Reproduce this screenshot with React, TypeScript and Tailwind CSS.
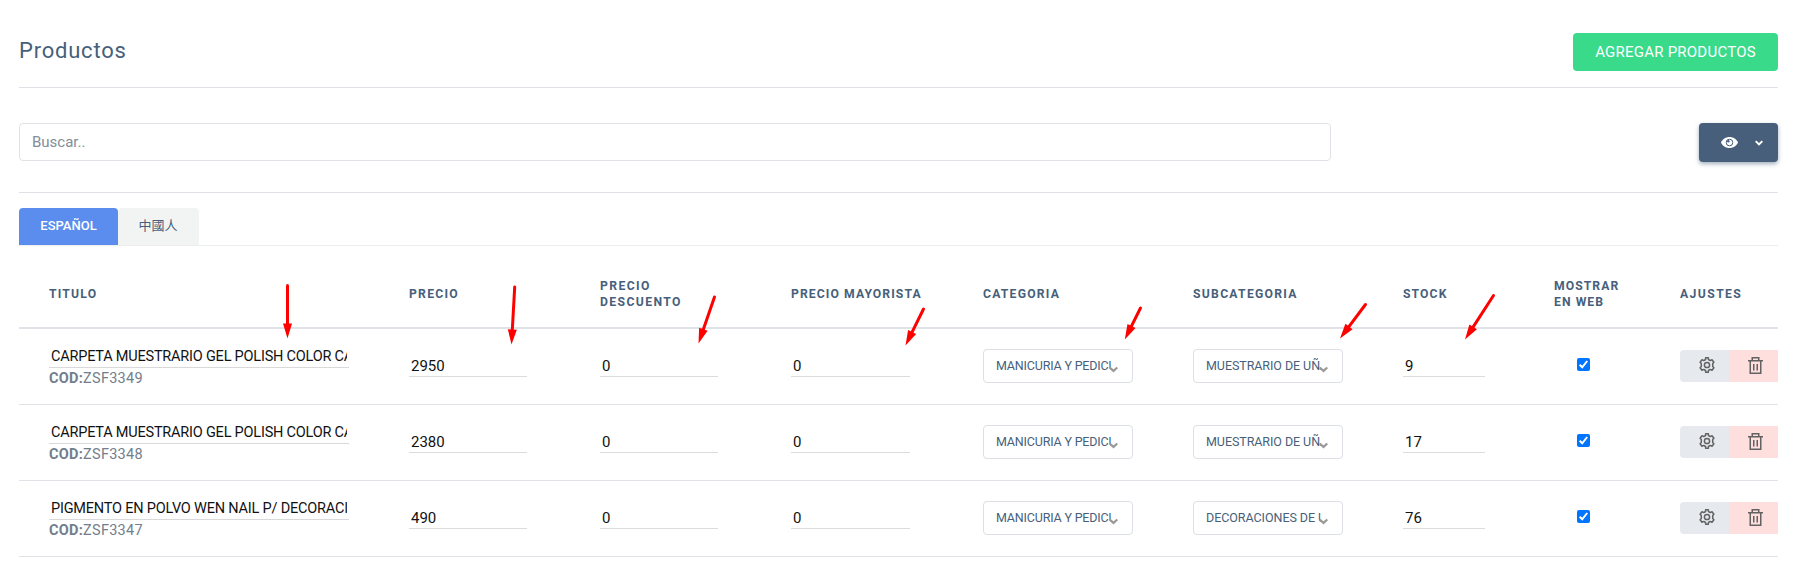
import React from "react";

const columns =
  "grid grid-cols-[360px_191px_191px_192px_210px_210px_151px_126px_128px] [&>*]:pl-[30px]";

type Fit = { text: string; spacing: string };

type Product = {
  title: Fit;
  code: string;
  price: string;
  category: Fit;
  subcategory: Fit;
  stock: string;
};

const manicuria: Fit = { text: "MANICURIA Y PEDICU", spacing: "tracking-[-0.18px]" };
const muestrario: Fit = { text: "MUESTRARIO DE UÑA", spacing: "tracking-[-0.07px]" };
const carpeta: Fit = { text: "CARPETA MUESTRARIO GEL POLISH COLOR CA", spacing: "tracking-[-0.21px]" };

const products: Product[] = [
  { title: carpeta, code: "ZSF3349", price: "2950", category: manicuria, subcategory: muestrario, stock: "9" },
  { title: carpeta, code: "ZSF3348", price: "2380", category: manicuria, subcategory: muestrario, stock: "17" },
  {
    title: { text: "PIGMENTO EN POLVO WEN NAIL P/ DECORACIO", spacing: "tracking-[-0.2px]" },
    code: "ZSF3347",
    price: "490",
    category: manicuria,
    subcategory: { text: "DECORACIONES DE U", spacing: "tracking-[-0.05px]" },
    stock: "76",
  },
];

const headers: { lines: string[]; spacing: string }[] = [
  { lines: ["TITULO"], spacing: "tracking-[1.2px]" },
  { lines: ["PRECIO"], spacing: "tracking-[1.25px]" },
  { lines: ["PRECIO", "DESCUENTO"], spacing: "tracking-[1.38px]" },
  { lines: ["PRECIO MAYORISTA"], spacing: "tracking-[1.08px]" },
  { lines: ["CATEGORIA"], spacing: "tracking-[1.2px]" },
  { lines: ["SUBCATEGORIA"], spacing: "tracking-[1.27px]" },
  { lines: ["STOCK"], spacing: "tracking-[1.1px]" },
  { lines: ["MOSTRAR", "EN WEB"], spacing: "tracking-[1.05px]" },
  { lines: ["AJUSTES"], spacing: "tracking-[1.4px]" },
];

const arrows = [
  [287.5, 285.5, 287.5, 338.5],
  [514.7, 287, 511.5, 344.5],
  [714.5, 297, 698.5, 343.5],
  [923.5, 309, 905.5, 345.5],
  [1140.5, 308, 1124.8, 339.5],
  [1365.5, 304.5, 1340, 338.5],
  [1493.5, 295.5, 1465, 339.5],
];

function Arrow({ points }: { points: number[] }) {
  const [x1, y1, x2, y2] = points;
  const length = Math.hypot(x2 - x1, y2 - y1);
  const angle = (Math.atan2(y2 - y1, x2 - x1) * 180) / Math.PI;
  return (
    <g transform={`translate(${x1} ${y1}) rotate(${angle})`}>
      <path d={`M0 0H${length - 13}`} stroke="#ff0000" strokeWidth="3" strokeLinecap="round" />
      <path d={`M${length} 0l-15 -4.5v9z`} fill="#ff0000" />
    </g>
  );
}

function Field({ value, width }: { value: string; width: string }) {
  return (
    <div className={`mt-[25px] h-[23px] border-b border-[#dcdcdc] pl-[2px] text-[15px] leading-[24px] text-[#111] ${width}`}>
      {value}
    </div>
  );
}

function Select({ value }: { value: Fit }) {
  return (
    <div className="relative mt-[20px] h-[34px] w-[150px] rounded-[4px] border border-[#dcdfe6] pl-[12px]">
      <div className={`w-[115px] overflow-hidden text-[12.5px] leading-[32px] whitespace-nowrap text-[#475f7b] ${value.spacing}`}>
        {value.text}
      </div>
      <svg className="absolute top-[16px] right-[14px] h-[7px] w-[9px]" viewBox="0 0 9 7" fill="none">
        <path d="M.7 1.500l3.800 3.400L8.300 1.500" stroke="#999" strokeWidth="2.2" />
      </svg>
    </div>
  );
}

function GearIcon() {
  return (
    <svg className="h-4 w-4" viewBox="0 0 16 16" fill="none" stroke="#626262" strokeWidth="1.5" strokeLinejoin="round">
      <path d="M6.6 .8h2.8v1.7l1.900 1.100 1.700-.8 1.900 2.500-1.200 1.200v3l1.200 1.200-1.900 2.500-1.700-.8-1.900 1.100v1.700H6.600v-1.700l-1.900-1.100-1.700.8-1.900-2.500 1.200-1.200v-3L1.100 5.300 3 2.800l1.700.8 1.900-1.100z" />
      <circle cx="8" cy="8" r="2.600" />
    </svg>
  );
}

function TrashIcon() {
  return (
    <svg className="h-[17px] w-[15px]" viewBox="0 0 15 17" fill="none" stroke="#626262" strokeWidth="1.5">
      <path d="M0 3.75h15M4.25 3.500v-2.750h6.500V3.500M2.250 4v12.250h10.500V4M5.750 7v6.500M9.250 7v6.500" />
    </svg>
  );
}

export default function App() {
  return (
    <div className="relative h-[575px] w-[1807px] overflow-hidden bg-white pr-[29px] pl-[19px] font-['Roboto',sans-serif]">
      <header className="flex h-[88px] items-start justify-between border-b border-[#dee2e6] pt-[33px]">
        <h1 className="text-[22px] leading-[35px] tracking-[0.78px] text-[#475f7b]">Productos</h1>
        <button className="h-[38px] w-[205px] rounded-[4px] bg-[#39da8a] text-[15px] leading-[38px] tracking-[0.23px] text-white">
          AGREGAR PRODUCTOS
        </button>
      </header>

      <div className="flex h-[105px] items-start justify-between border-b border-[#dee2e6] pt-[35px]">
        <div className="h-[38px] w-[1312px] rounded-[4px] border border-[#dfe3e7] pl-[12px] text-[15px] leading-[36px] text-[#828d99]">
          Buscar..
        </div>
        <button className="flex h-[39px] w-[79px] items-center rounded-[4px] bg-[#475f7b] pl-[22px] shadow-[0_2px_4px_rgba(71,95,123,0.5)]">
          <svg className="h-[11px] w-[17px]" viewBox="0 0 17 11">
            <path d="M8.5 0C4.7 0 1.500 2.200 0 5.500 1.500 8.800 4.700 11 8.500 11s7-2.200 8.500-5.500C15.500 2.200 12.300 0 8.500 0z" fill="#fff" />
            <circle cx="8.5" cy="5.500" r="3.300" fill="none" stroke="#475f7b" strokeWidth="1" />
            <circle cx="7.300" cy="4.300" r="1.200" fill="#475f7b" />
          </svg>
          <svg className="ml-[17px] h-[6px] w-[8px]" viewBox="0 0 8 6" fill="none">
            <path d="M.7 1.100L4 4.400l3.300-3.300" stroke="#fff" strokeWidth="2" />
          </svg>
        </button>
      </div>

      <nav className="mt-[15px] flex h-[38px] border-b border-[#ededed]">
        <div className="h-[37px] w-[99px] rounded-t-[4px] bg-[#5a8dee] text-center text-[13px] leading-[36px] font-medium text-white">
          ESPAÑOL
        </div>
        <div className="h-[37px] w-[81px] rounded-t-[4px] bg-[#f2f4f4] pr-[1px] text-center font-['Noto_Sans_CJK_TC',sans-serif] text-[13px] leading-[33px] text-[#475f7b]">
          中國人
        </div>
      </nav>

      <section>
        <div className={`${columns} h-[83px] items-center border-b-2 border-[#dfe3e7]`}>
          {headers.map((header) => (
            <div key={header.lines.join(" ")} className={`pt-[15px] text-[12.2px] leading-[16px] font-bold whitespace-nowrap text-[#475f7b] ${header.spacing}`}>
              {header.lines.map((line) => (
                <div key={line}>{line}</div>
              ))}
            </div>
          ))}
        </div>
        {products.map((product) => (
          <div key={product.code} className={`${columns} h-[76px] border-b border-[#dfe3e7]`}>
            <div>
              <div className="mt-[15px] h-[24px] w-[300px] border-b border-[#d9d9d9] pt-[2px] pl-[2px]">
                <div className={`w-[296px] overflow-hidden text-[14.5px] leading-[21px] whitespace-nowrap text-[#111] ${product.title.spacing}`}>
                  {product.title.text}
                </div>
              </div>
              <div className="pt-px text-[14.5px] leading-[19px] tracking-[0.27px] text-[#727e8c]">
                <b>COD:</b>
                {product.code}
              </div>
            </div>
            <div><Field value={product.price} width="w-[118px]" /></div>
            <div><Field value="0" width="w-[118px]" /></div>
            <div><Field value="0" width="w-[119px]" /></div>
            <div><Select value={product.category} /></div>
            <div><Select value={product.subcategory} /></div>
            <div><Field value={product.stock} width="w-[82px]" /></div>
            <div>
              <div className="mt-[29px] ml-[23px] flex h-[13px] w-[13px] items-center justify-center rounded-[2px] bg-[#0075ff]">
                <svg className="h-[13px] w-[13px]" viewBox="0 0 13 13" fill="none">
                  <path d="M2.700 6.800l2.500 2.500 5-6.300" stroke="#fff" strokeWidth="2" />
                </svg>
              </div>
            </div>
            <div>
              <div className="mt-[21px] flex h-[32px] w-[98px] rounded-l-[4px] bg-[#e6eaee]">
                <div className="flex w-[49px] justify-center pt-[7px] pl-[5px]"><GearIcon /></div>
                <div className="flex w-[49px] justify-center rounded-l-[4px] bg-[#ffdede] pt-[7px] pl-[4px]"><TrashIcon /></div>
              </div>
            </div>
          </div>
        ))}
      </section>

      <svg className="pointer-events-none absolute top-0 left-0 h-[575px] w-[1807px]" viewBox="0 0 1807 575">
        {arrows.map((points) => (
          <Arrow key={points[0]} points={points} />
        ))}
      </svg>
    </div>
  );
}
